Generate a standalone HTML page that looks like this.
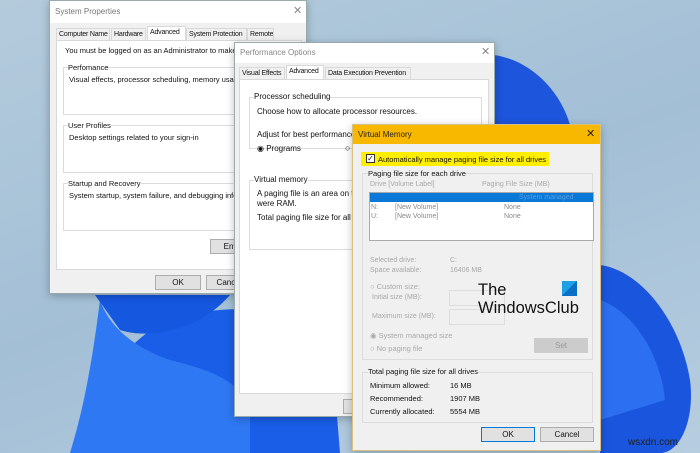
<!DOCTYPE html>
<html><head><meta charset="utf-8"><style>
*{margin:0;padding:0;box-sizing:border-box}
body{width:700px;height:453px;overflow:hidden;position:relative;font-family:"Liberation Sans",sans-serif;font-size:8px;color:#111;background:linear-gradient(160deg,#b4cbdc 0%,#a3bfd6 50%,#b7cde0 100%)}
.a{position:absolute}
.win{position:absolute;background:#f0f0f0;border:1px solid #9aa;box-shadow:0 2px 8px rgba(0,0,0,.25)}
.t{white-space:nowrap;position:absolute}
.grp{position:absolute;border:1px solid #dcdcdc}
.btn{position:absolute;background:#e1e1e1;border:1px solid #adadad;text-align:center;font-size:8px;line-height:14px}
.tab{position:absolute;top:0;height:12px;border:1px solid #d9d9d9;border-bottom:none;background:#f0f0f0;font-size:7px;line-height:11px;padding:0 2px;white-space:nowrap;overflow:hidden;letter-spacing:-0.2px}
.g{color:#a8a8a8}
</style></head><body>
<svg class="a" style="left:0;top:0" width="700" height="453">
<path d="M80 453 C90 400 120 340 170 320 C230 300 300 310 330 330 L340 453Z" fill="#1a5ee8"/>
<path d="M100 300 C110 330 140 350 170 360 C210 370 240 380 250 410 L250 453 L70 453 C80 420 90 380 100 300Z" fill="#2f78f3"/>
<path d="M95 295 L230 295 C200 330 150 340 120 330Z" fill="#1657e0"/>
<path d="M494 55 C530 60 560 90 570 125 L494 125Z" fill="#1d55dc"/>
<path d="M600 265 C640 270 680 320 690 380 C695 420 680 453 660 453 L600 453Z" fill="#1a55dd"/>
<path d="M600 300 C630 310 660 350 665 400 L600 420Z" fill="#2c6ff0"/>
</svg>

<!-- System Properties -->
<div class="win" style="left:49px;top:0;width:258px;height:294px">
 <div class="a" style="left:0;top:0;width:256px;height:22px;background:#fff"></div>
 <div class="t" style="left:5px;top:6px;color:#777;font-size:8px">System Properties</div>
 <div class="t" style="left:243px;top:3px;color:#888;font-size:11px">✕</div>
 <div class="a" style="left:6px;top:27px;width:246px;height:12px">
  <div class="tab" style="left:0;width:54px">Computer Name</div>
  <div class="tab" style="left:55px;width:35px">Hardware</div>
  <div class="tab" style="left:91px;top:-2px;height:14px;width:39px;background:#fff">Advanced</div>
  <div class="tab" style="left:130px;width:61px">System Protection</div>
  <div class="tab" style="left:191px;width:27px">Remote</div>
 </div>
 <div class="a" style="left:6px;top:39px;width:246px;height:230px;background:#fff;border:1px solid #d9d9d9"></div>
 <div class="t" style="left:15px;top:45px;font-size:7.5px">You must be logged on as an Administrator to make most</div>
 <div class="grp" style="left:13px;top:66px;width:230px;height:48px"></div>
 <div class="t" style="left:18px;top:62px;background:#fff;font-size:7.5px">Perfomance</div>
 <div class="t" style="left:19px;top:74px;font-size:7.5px">Visual effects, processor scheduling, memory usage, and</div>
 <div class="grp" style="left:13px;top:124px;width:230px;height:48px"></div>
 <div class="t" style="left:18px;top:120px;background:#fff;font-size:7.5px">User Profiles</div>
 <div class="t" style="left:19px;top:132px;font-size:7.5px">Desktop settings related to your sign-in</div>
 <div class="grp" style="left:13px;top:182px;width:230px;height:48px"></div>
 <div class="t" style="left:18px;top:178px;background:#fff;font-size:7.5px">Startup and Recovery</div>
 <div class="t" style="left:19px;top:190px;font-size:7.5px">System startup, system failure, and debugging information</div>
 <div class="btn" style="left:160px;top:238px;width:50px;height:15px">Enviro</div>
 <div class="btn" style="left:105px;top:274px;width:46px;height:15px">OK</div>
 <div class="btn" style="left:156px;top:274px;width:46px;height:15px">Cancel</div>
</div>

<!-- Performance Options -->
<div class="win" style="left:234px;top:42px;width:261px;height:375px">
 <div class="a" style="left:0;top:0;width:259px;height:20px;background:#fff"></div>
 <div class="t" style="left:5px;top:5px;color:#888;font-size:8px">Performance Options</div>
 <div class="t" style="left:246px;top:2px;color:#888;font-size:11px">✕</div>
 <div class="a" style="left:4px;top:24px;width:250px;height:12px">
  <div class="tab" style="left:0;width:46px">Visual Effects</div>
  <div class="tab" style="left:47px;top:-2px;height:14px;width:38px;background:#fff">Advanced</div>
  <div class="tab" style="left:86px;width:86px">Data Execution Prevention</div>
 </div>
 <div class="a" style="left:4px;top:36px;width:250px;height:315px;background:#fff;border:1px solid #d9d9d9"></div>
 <div class="grp" style="left:14px;top:54px;width:233px;height:52px"></div>
 <div class="t" style="left:19px;top:49px;background:#fff;font-size:8px">Processor scheduling</div>
 <div class="t" style="left:22px;top:64px;font-size:8px">Choose how to allocate processor resources.</div>
 <div class="t" style="left:22px;top:87px;font-size:8px">Adjust for best performance of</div>
 <div class="t" style="left:22px;top:101px;font-size:8px">◉ Programs</div>
 <div class="t" style="left:110px;top:100px;font-size:9px">○</div>
 <div class="grp" style="left:14px;top:137px;width:233px;height:70px"></div>
 <div class="t" style="left:19px;top:132px;background:#fff;font-size:8px">Virtual memory</div>
 <div class="t" style="left:22px;top:146px;font-size:8px">A paging file is an area on the</div>
 <div class="t" style="left:22px;top:156px;font-size:8px">were RAM.</div>
 <div class="t" style="left:22px;top:170px;font-size:8px">Total paging file size for all dri</div>
 <div class="btn" style="left:108px;top:356px;width:20px;height:15px"></div>
</div>

<!-- Virtual Memory -->
<div class="win" style="left:352px;top:124px;width:249px;height:327px;border-color:#d8c080;background:#f0f0f0">
 <div class="a" style="left:0;top:0;width:247px;height:19px;background:#f8b800"></div>
 <div class="t" style="left:5px;top:5px;font-size:8px;color:#222">Virtual Memory</div>
 <div class="t" style="left:233px;top:2px;font-size:11px;color:#222">✕</div>
 <div class="a" style="left:8px;top:27px;width:188px;height:14px;background:#ffee00"></div>
 <div class="a" style="left:13px;top:29px;width:9px;height:9px;border:1px solid #333;background:#fff;font-size:8px;line-height:7px;text-align:center">✓</div>
 <div class="t" style="left:25px;top:30px;font-size:7.5px">Automatically manage paging file size for all drives</div>
 <div class="grp" style="left:9px;top:48px;width:231px;height:187px"></div>
 <div class="t" style="left:15px;top:44px;font-size:7.5px;background:#f0f0f0">Paging file size for each drive</div>
 <div class="t g" style="left:17px;top:56px;font-size:7px">Drive  [Volume Label]</div>
 <div class="t g" style="left:129px;top:56px;font-size:7px">Paging File Size (MB)</div>
 <div class="a" style="left:16px;top:67px;width:225px;height:49px;background:#fff;border:1px solid #aaa"></div>
 <div class="a" style="left:17px;top:68px;width:223px;height:9px;background:#0a78d7"></div>
 <div class="t" style="left:166px;top:69px;font-size:7px;color:#5a9ee0">System managed</div>
 <div class="t" style="left:18px;top:79px;font-size:7px;color:#888">N:</div>
 <div class="t" style="left:42px;top:79px;font-size:7px;color:#888">[New Volume]</div>
 <div class="t" style="left:151px;top:79px;font-size:7px;color:#888">None</div>
 <div class="t" style="left:18px;top:88px;font-size:7px;color:#888">U:</div>
 <div class="t" style="left:42px;top:88px;font-size:7px;color:#888">[New Volume]</div>
 <div class="t" style="left:151px;top:88px;font-size:7px;color:#888">None</div>
 <div class="t g" style="left:17px;top:132px;font-size:7px">Selected drive:</div>
 <div class="t g" style="left:97px;top:132px;font-size:7px">C:</div>
 <div class="t g" style="left:17px;top:142px;font-size:7px">Space available:</div>
 <div class="t g" style="left:97px;top:142px;font-size:7px">16406 MB</div>
 <div class="t g" style="left:17px;top:157px;font-size:7.5px">○ Custom size:</div>
 <div class="t g" style="left:19px;top:169px;font-size:7px">Initial size (MB):</div>
 <div class="a" style="left:96px;top:165px;width:56px;height:16px;border:1px solid #ddd"></div>
 <div class="t g" style="left:19px;top:188px;font-size:7px">Maximum size (MB):</div>
 <div class="a" style="left:96px;top:184px;width:56px;height:16px;border:1px solid #ddd"></div>
 <div class="t g" style="left:17px;top:206px;font-size:7.5px">◉ System managed size</div>
 <div class="t g" style="left:17px;top:219px;font-size:7.5px">○ No paging file</div>
 <div class="btn" style="left:181px;top:213px;width:54px;height:15px;background:#ccc;border-color:#ccc;color:#999">Set</div>
 <div class="grp" style="left:9px;top:247px;width:231px;height:51px"></div>
 <div class="t" style="left:15px;top:242px;font-size:7.5px;background:#f0f0f0">Total paging file size for all drives</div>
 <div class="t" style="left:17px;top:256px;font-size:7.5px">Minimum allowed:</div>
 <div class="t" style="left:97px;top:256px;font-size:7.5px">16 MB</div>
 <div class="t" style="left:17px;top:269px;font-size:7.5px">Recommended:</div>
 <div class="t" style="left:97px;top:269px;font-size:7.5px">1907 MB</div>
 <div class="t" style="left:17px;top:282px;font-size:7.5px">Currently allocated:</div>
 <div class="t" style="left:97px;top:282px;font-size:7.5px">5554 MB</div>
 <div class="btn" style="left:128px;top:302px;width:54px;height:15px;border:1px solid #0078d7">OK</div>
 <div class="btn" style="left:187px;top:302px;width:54px;height:15px">Cancel</div>
 <div class="t" style="left:125px;top:156px;font-size:16.5px;color:#111;line-height:18px">The<br>WindowsClub</div>
 <div class="a" style="left:209px;top:156px;width:15px;height:15px;background:linear-gradient(135deg,#1ea0e6 50%,#0b6fc6 50%)"></div>
</div>
<div class="t" style="left:628px;top:437px;font-size:10px;color:#222">wsxdn.com</div>
</body></html>
